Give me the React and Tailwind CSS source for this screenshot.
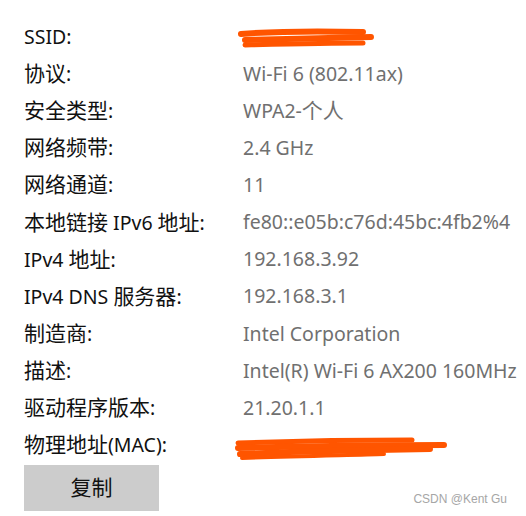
import React from "react";

const rows = [
  ["SSID:", ""],
  ["协议:", "Wi-Fi 6 (802.11ax)"],
  ["安全类型:", "WPA2-个人"],
  ["网络频带:", "2.4 GHz"],
  ["网络通道:", "11"],
  ["本地链接 IPv6 地址:", "fe80::e05b:c76d:45bc:4fb2%4"],
  ["IPv4 地址:", "192.168.3.92"],
  ["IPv4 DNS 服务器:", "192.168.3.1"],
  ["制造商:", "Intel Corporation"],
  ["描述:", "Intel(R) Wi-Fi 6 AX200 160MHz"],
  ["驱动程序版本:", "21.20.1.1"],
  ["物理地址(MAC):", ""],
];

function Mixed({ text }) {
  const parts = text.split(/([\u4e00-\u9fff]+)/);
  return parts.map((p, i) =>
    /[\u4e00-\u9fff]/.test(p) ? (
      <span key={i} className="text-[21px]">{p}</span>
    ) : (
      <span key={i}>{p}</span>
    )
  );
}

function Scribble1() {
  return (
    <svg className="absolute left-[-6px] top-[-12px]" width="140" height="30" viewBox="0 0 140 30">
      <path d="M4 9 C40 6 80 6 126 7" stroke="#ff5500" strokeWidth="6" strokeLinecap="round" fill="none" />
      <path d="M8 15 C50 14 90 13 134 12" stroke="#ff5500" strokeWidth="6" strokeLinecap="round" fill="none" />
      <path d="M8 20 C50 19 90 18 126 18" stroke="#ff5500" strokeWidth="5" strokeLinecap="round" fill="none" />
    </svg>
  );
}

function Scribble2() {
  return (
    <svg className="absolute left-[-9px] top-[-11px]" width="215" height="30" viewBox="0 0 215 30">
      <path d="M4 9 C60 7 130 6 178 6" stroke="#ff5500" strokeWidth="5" strokeLinecap="round" fill="none" />
      <path d="M4 14 C70 12 140 11 210 11" stroke="#ff5500" strokeWidth="6" strokeLinecap="round" fill="none" />
      <path d="M6 20 C70 17 130 16 196 15" stroke="#ff5500" strokeWidth="6" strokeLinecap="round" fill="none" />
      <path d="M8 24 C60 22 120 21 150 20" stroke="#ff5500" strokeWidth="4" strokeLinecap="round" fill="none" />
    </svg>
  );
}

export default function App() {
  return (
    <div
      className="relative w-[526px] h-[516px] bg-white overflow-hidden"
      style={{ fontFamily: '"Noto Sans", "Noto Sans CJK SC", sans-serif' }}
    >
      <div className="flex flex-col pt-[18px] pl-[24px]">
        {rows.map(([k, v], i) => (
          <div key={i} className="flex items-center h-[37.1px] text-[19.5px] leading-none">
            <div className="w-[219px] text-[#111] whitespace-nowrap">
              <Mixed text={k} />
            </div>
            <div className="relative text-[#707070] whitespace-nowrap">
              <Mixed text={v} />
              {i === 0 && <Scribble1 />}
              {i === 11 && <Scribble2 />}
            </div>
          </div>
        ))}
        <div className="mt-[2px] flex items-center justify-center w-[135px] h-[46px] bg-[#cccccc] text-[21px] text-[#111]">
          复制
        </div>
      </div>
      <div
        className="absolute right-[19px] bottom-[11px] text-[12px] text-[#a6a6a6] leading-none"
        style={{ fontFamily: '"Liberation Sans", sans-serif' }}
      >
        CSDN @Kent Gu
      </div>
    </div>
  );
}
